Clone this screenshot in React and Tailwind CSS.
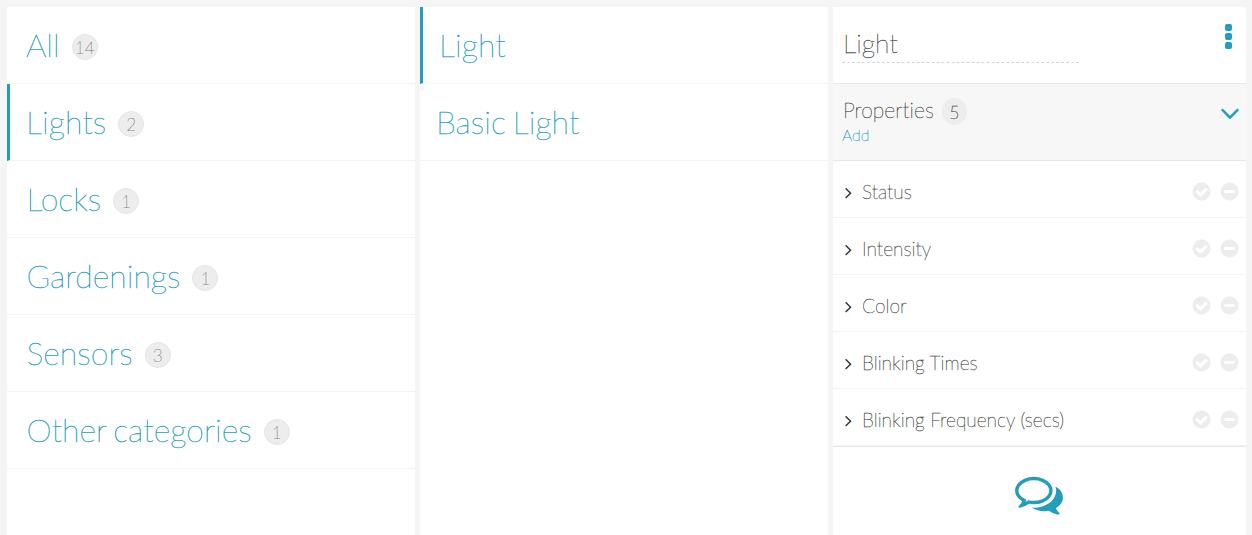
const ICONS = {
  check:
    "M1412 734q0-28-18-46l-91-90q-19-19-45-19t-45 19l-408 407-226-226q-19-19-45-19t-45 19l-91 90q-18 18-18 46 0 27 18 45l362 362q19 19 45 19 27 0 46-19l543-543q18-18 18-45zm252 162q0 209-103 385.5t-279.5 279.5-385.5 103-385.5-103-279.5-279.5-103-385.5 103-385.5 279.5-279.5 385.5-103 385.5 103 279.5 279.5 103 385.5z",
  minus:
    "M1344 960v-128q0-26-19-45t-45-19h-768q-26 0-45 19t-19 45v128q0 26 19 45t45 19h768q26 0 45-19t19-45zm320-64q0 209-103 385.5t-279.5 279.5-385.5 103-385.5-103-279.5-279.5-103-385.5 103-385.5 279.5-279.5 385.5-103 385.5 103 279.5 279.5 103 385.5z",
  right:
    "M1171 960q0 13-10 23l-466 466q-10 10-23 10t-23-10l-50-50q-10-10-10-23t10-23l393-393-393-393q-10-10-10-23t10-23l50-50q10-10 23-10t23 10l466 466q10 10 10 23z",
  down:
    "M1395 736q0 13-10 23l-466 466q-10 10-23 10t-23-10l-466-466q-10-10-10-23t10-23l50-50q10-10 23-10t23 10l393 393 393-393q10-10 23-10t23 10l50 50q10 10 10 23z",
  comments:
    "M704 384q-153 0-286 52t-211.5 141-78.5 191q0 82 53 158t149 132l97 56-35 84q34-20 62-39l44-31 53 10q78 14 153 14 153 0 286-52t211.5-141 78.5-191-78.5-191-211.5-141-286-52zm0-128q191 0 353.5 68.5t256.5 186.5 94 257-94 257-256.5 186.5-353.5 68.5q-86 0-176-16-124 88-278 128-36 9-86 16h-3q-11 0-20.5-8t-11.5-21q-1-3-1-6.5t.5-6.5 2-6l2.5-5 3.5-5.5 4-5 4.5-5 4-4.5q5-6 23-25t26-29.5 22.5-29 25-38.5 20.5-44q-124-72-195-177t-71-224q0-139 94-257t256.5-186.5 353.5-68.5zm822 1169q10 24 20.5 44t25 38.5 22.5 29 26 29.5 23 25q1 1 4 4.5t4.5 5 4 5 3.5 5.5l2.5 5 2 6 .5 6.5-1 6.5q-3 14-13 22t-22 7q-50-7-86-16-154-40-278-128-90 16-176 16-271 0-472-132 58 4 88 4 161 0 309-45t264-129q125-92 192-212t67-254q0-77-23-152 129 71 204 178t75 230q0 120-71 224.5t-195 176.5z",
};

function Icon({ name, className }) {
  return (
    <svg viewBox="0 0 1792 1792" fill="currentColor" className={`shrink-0 ${className}`}>
      <path d={ICONS[name]} />
    </svg>
  );
}

const categories = [
  { label: "All", count: 14, pad: "pl-[19px]" },
  { label: "Lights", count: 2, active: true, pad: "pl-4" },
  { label: "Locks", count: 1, pad: "pl-[19.5px]" },
  { label: "Gardenings", count: 1, pad: "pl-[19.5px]" },
  { label: "Sensors", count: 3, pad: "pl-[19.5px]" },
  { label: "Other categories", count: 1, pad: "pl-[19.5px]" },
];

const devices = [
  { label: "Light", active: true, pad: "pl-4" },
  { label: "Basic Light", pad: "pl-4" },
];

const properties = ["Status", "Intensity", "Color", "Blinking Times", "Blinking Frequency (secs)"];

function Row({ label, count, active, pad }) {
  return (
    <li
      className={`flex h-[77px] items-center border-b border-b-[#f3f3f3] text-[#249dbd] ${pad} ${
        active ? "border-l-3 border-l-[#249dbd]" : ""
      }`}
    >
      <span className="text-[32px] leading-10 tracking-[0.06px] [word-spacing:-2.5px] [-webkit-text-stroke:0.4px_currentColor]">
        {label}
      </span>
      {count && (
        <span className="mt-[3px] ml-3 flex size-[26px] items-center justify-center rounded-full border border-[#e5e5e5] bg-[#ededed] pt-[2px] text-[17px] text-[#777] [-webkit-text-stroke:0.2px_currentColor]">
          {count}
        </span>
      )}
    </li>
  );
}

export default function App() {
  return (
    <div className="grid h-[535px] grid-cols-[408px_408px_413px] gap-[5px] overflow-hidden bg-[#f5f5f5] pt-[7px] pl-[7px] font-['Lato',sans-serif] font-[100] [font-variant-ligatures:none]">
      <ul className="bg-white">
        {categories.map((c) => (
          <Row key={c.label} {...c} />
        ))}
      </ul>
      <ul className="bg-white">
        {devices.map((d) => (
          <Row key={d.label} {...d} />
        ))}
      </ul>
      <section className="bg-white text-[#333] [-webkit-text-stroke:0.28px_currentColor]">
        <header className="flex h-[77px] justify-between border-b border-[#e8e8e8] pr-[14px] pl-[9px]">
          <div className="mt-5 flex h-9 w-[237px] items-center border-b border-dashed border-[#d5d5d5] pb-px pl-px text-[26.5px]">
            Light
          </div>
          <div className="mt-[17px] flex flex-col gap-[2px]">
            <span className="size-[7px] rounded-[2px] bg-[#249dbd]" />
            <span className="size-[7px] rounded-[2px] bg-[#249dbd]" />
            <span className="size-[7px] rounded-[2px] bg-[#249dbd]" />
          </div>
        </header>
        <div className="flex h-[77px] justify-between border-b border-[#e8e8e8] bg-[#f7f7f7] pl-[9px]">
          <div className="pt-3">
            <div className="flex items-start pl-px text-[21px] leading-[29px]">
              <span className="-mt-px tracking-[0.1px]">Properties</span>
              <span className="mt-[2px] ml-2 flex h-[27px] w-[25px] items-center justify-center rounded-full bg-[#ededed] pt-px text-[17px]">
                5
              </span>
            </div>
            <div className="text-[16px] leading-5 text-[#249dbd]">Add</div>
          </div>
          <Icon name="down" className="mt-[13px] size-8 text-[#249dbd]" />
        </div>
        <ul className="border-b border-[#e8e8e8]">
          {properties.map((p) => (
            <li key={p} className="flex h-[57px] items-center border-b border-[#f3f3f3] pt-[7px] pr-[6px] pl-[6px]">
              <Icon name="right" className="size-[19px] text-[#333]" />
              <span className="ml-1 flex-1 text-[19.2px]">{p}</span>
              <span className="-mt-[3px] flex gap-[7px] text-[#ededed]">
                <Icon name="check" className="size-[21px]" />
                <Icon name="minus" className="size-[21px]" />
              </span>
            </li>
          ))}
        </ul>
        <div className="flex justify-center pt-[23px] pr-[2px]">
          <Icon name="comments" className="size-[48px] text-[#249dbd]" />
        </div>
      </section>
    </div>
  );
}
